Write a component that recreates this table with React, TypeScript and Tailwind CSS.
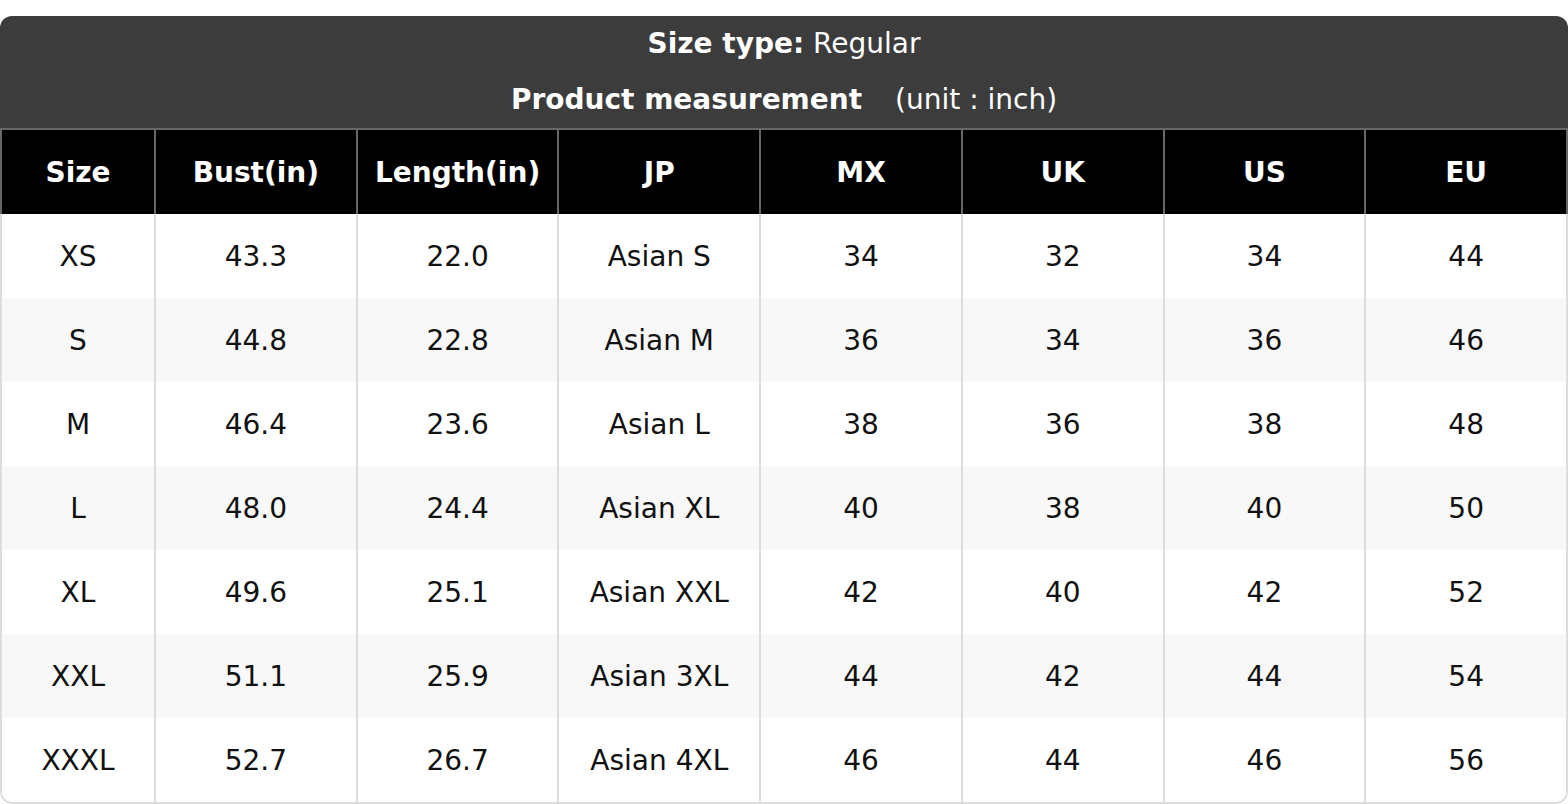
import React from "react";

const headers = ["Size", "Bust(in)", "Length(in)", "JP", "MX", "UK", "US", "EU"];
const rows: string[][] = [
  ["XS", "43.3", "22.0", "Asian S", "34", "32", "34", "44"],
  ["S", "44.8", "22.8", "Asian M", "36", "34", "36", "46"],
  ["M", "46.4", "23.6", "Asian L", "38", "36", "38", "48"],
  ["L", "48.0", "24.4", "Asian XL", "40", "38", "40", "50"],
  ["XL", "49.6", "25.1", "Asian XXL", "42", "40", "42", "52"],
  ["XXL", "51.1", "25.9", "Asian 3XL", "44", "42", "44", "54"],
  ["XXXL", "52.7", "26.7", "Asian 4XL", "46", "44", "46", "56"],
];

export default function App() {
  return (
    <div
      className="w-[1568px] h-[804px] bg-white pt-[16px] overflow-hidden"
      style={{ fontFamily: '"DejaVu Sans", "Liberation Sans", sans-serif' }}
    >
      <div className="rounded-[12px] overflow-hidden">
        <div className="bg-[#3c3c3c] text-white text-[28px] flex flex-col items-center">
          <div className="h-[56px] flex items-center">
            <span className="font-bold">Size type:</span>
            <span>&nbsp;Regular</span>
          </div>
          <div className="h-[56px] flex items-center">
            <span className="font-bold">Product measurement</span>
            <span className="ml-[33px]">(unit : inch)</span>
          </div>
        </div>
        <div className="grid grid-cols-[152px_repeat(7,1fr)] bg-black border-x-2 border-t-2 border-[#666] text-white font-bold text-[28px]">
          {headers.map((h, i) => (
            <div
              key={h}
              className={`h-[84px] pt-[2px] flex items-center justify-center ${i > 0 ? "border-l-2 border-[#666]" : ""}`}
            >
              {h}
            </div>
          ))}
        </div>
        <div className="border-x-2 border-b-2 border-[#ddd] rounded-b-[12px] overflow-hidden text-[28px] text-[#111]">
          {rows.map((r, ri) => (
            <div
              key={ri}
              className={`grid grid-cols-[152px_repeat(7,1fr)] ${ri % 2 === 1 ? "bg-[#f8f8f8]" : "bg-white"}`}
            >
              {r.map((c, ci) => (
                <div
                  key={ci}
                  className={`h-[84px] pt-[2px] flex items-center justify-center ${ci > 0 ? "border-l-2 border-[#ddd]" : ""}`}
                >
                  {c}
                </div>
              ))}
            </div>
          ))}
        </div>
      </div>
    </div>
  );
}
